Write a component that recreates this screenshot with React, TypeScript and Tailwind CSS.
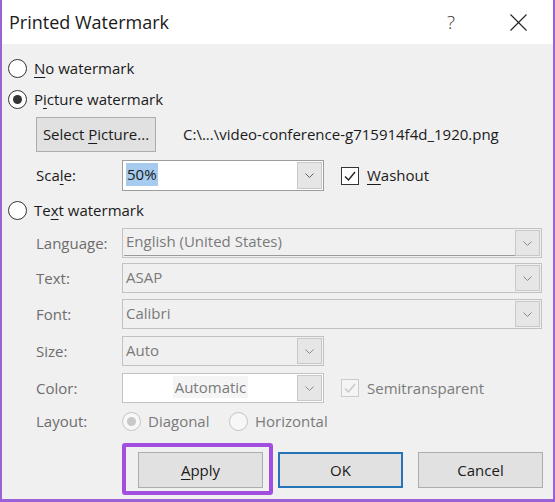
import type { ReactNode } from "react";

const ui = "font-['Segoe_UI','Open_Sans','Noto_Sans',sans-serif]";

function U({ children }: { children: ReactNode }) {
  return <span className="underline underline-offset-[3px] decoration-1">{children}</span>;
}

function Radio({ checked, disabled }: { checked?: boolean; disabled?: boolean }) {
  return (
    <span
      className={`flex h-[19px] w-[19px] shrink-0 items-center justify-center rounded-full border ${
        disabled ? "border-[#c4c4c4] bg-[#f7f7f7]" : "border-[#333333] bg-white"
      }`}
    >
      {checked && (
        <span className={`h-[9px] w-[9px] rounded-full ${disabled ? "bg-[#c8c8c8]" : "bg-[#333333]"}`} />
      )}
    </span>
  );
}

function Check({ disabled }: { disabled?: boolean }) {
  return (
    <span
      className={`flex h-[18px] w-[18px] shrink-0 items-center justify-center border ${
        disabled ? "border-[#cccccc] bg-[#f4f4f4]" : "border-[#333333] bg-white"
      }`}
    >
      <svg width="14" height="14" viewBox="0 0 14 14" fill="none">
        <polyline
          points="2,7.5 5.5,11 12,3"
          stroke={disabled ? "#c6c6c6" : "#222222"}
          strokeWidth="1.4"
        />
      </svg>
    </span>
  );
}

function Chevron({ disabled }: { disabled?: boolean }) {
  return (
    <svg width="9" height="5" viewBox="0 0 9 5" fill="none">
      <polyline points="0.5,0.5 4.5,4.5 8.5,0.5" stroke={disabled ? "#8a8a8a" : "#606060"} strokeWidth="1" />
    </svg>
  );
}

function Combo({
  value,
  wide,
  disabled,
  selected,
  center,
  white,
  line,
}: {
  value: string;
  wide?: boolean;
  disabled?: boolean;
  selected?: boolean;
  center?: boolean;
  white?: boolean;
  line?: boolean;
}) {
  return (
    <div
      className={`flex h-full ${wide ? "w-[420px]" : "w-[202px]"} items-stretch border p-px ${
        disabled ? "border-[#c2c2c2]" : "border-[#9c9c9c]"
      } ${white || !disabled ? "bg-white" : "bg-[#f0f0f0]"}`}
    >
      <div
        className={`flex flex-1 items-center pb-[2px] ${center ? "justify-center" : "pl-[2px]"} ${
          line ? "border-b border-[#9a9a9a]" : ""
        }`}
      >
        <span
          className={`${disabled ? "text-[#7a7a7a]" : "text-[#1b1b1b]"} ${
            selected ? "bg-[#a6cbee] px-px" : ""
          } ${center ? "bg-[#f5f5f5] px-[2px]" : ""}`}
        >
          {value}
        </span>
      </div>
      <div className="flex w-[25px] items-center justify-center border border-[#c8c8c8] bg-[#e6e6e6]">
        <Chevron disabled={disabled} />
      </div>
    </div>
  );
}

function Field({ label, children }: { label: ReactNode; children: ReactNode }) {
  return (
    <div className="flex h-full items-center">
      <span className="w-[86px] shrink-0">{label}</span>
      {children}
    </div>
  );
}

function Btn({ children, primary }: { children: ReactNode; primary?: boolean }) {
  return (
    <button
      type="button"
      className={`flex h-[36px] w-[125px] items-center justify-center bg-[#e1e1e1] text-[#1b1b1b] ${
        primary ? "border-2 border-[#2673b8]" : "border border-[#adadad]"
      }`}
    >
      <span>{children}</span>
    </button>
  );
}

export default function App() {
  return (
    <div
      className={`${ui} flex h-[502px] w-[555px] flex-col overflow-hidden border-x-2 border-b-[3px] border-[#9a62d4] text-[15px] text-[#1b1b1b]`}
    >
      {/* title bar */}
      <div className="flex h-[44px] shrink-0 items-center bg-white pl-[7px]">
        <span className="text-[18px] text-[#1a1a1a]">Printed Watermark</span>
        <span className="ml-auto text-[19px] font-light text-[#333333]">?</span>
        <svg className="ml-[55px] mr-[26px]" width="17" height="17" viewBox="0 0 17 17" fill="none">
          <line x1="0.5" y1="0.5" x2="16.5" y2="16.5" stroke="#222222" strokeWidth="1.1" />
          <line x1="16.5" y1="0.5" x2="0.5" y2="16.5" stroke="#222222" strokeWidth="1.1" />
        </svg>
      </div>

      <div className="flex flex-1 flex-col bg-[#f0f0f0]">
        <div className="mt-[15px] flex h-[19px] items-center gap-[7px] pl-[6px]">
          <Radio />
          <span>
            <U>N</U>o watermark
          </span>
        </div>

        <div className="mt-[12px] flex h-[19px] items-center gap-[7px] pl-[6px]">
          <Radio checked />
          <span>
            P<U>i</U>cture watermark
          </span>
        </div>

        <div className="mt-[8px] flex h-[35px] items-center pl-[34px]">
          <button
            type="button"
            className="flex h-full w-[120px] items-center justify-center border border-[#adadad] bg-[#e1e1e1]"
          >
            <span>
              Select <U>P</U>icture...
            </span>
          </button>
          <span className="ml-[27px]">C:\...\video-conference-g715914f4d_1920.png</span>
        </div>

        <div className="mt-[8px] h-[31px] pl-[34px]">
          <Field
            label={
              <>
                Sca<U>l</U>e:
              </>
            }
          >
            <Combo value="50%" selected />
            <div className="ml-[17px] flex items-center gap-[8px]">
              <Check />
              <span>
                <U>W</U>ashout
              </span>
            </div>
          </Field>
        </div>

        <div className="mt-[10px] flex h-[19px] items-center gap-[7px] pl-[6px]">
          <Radio />
          <span>
            Te<U>x</U>t watermark
          </span>
        </div>

        <div className="text-[#6d6d6d]">
          <div className="mt-[8px] h-[30px] pl-[34px]">
            <Field label="Language:">
              <Combo value="English (United States)" wide disabled line />
            </Field>
          </div>
          <div className="mt-[5px] h-[30px] pl-[34px]">
            <Field label="Text:">
              <Combo value="ASAP" wide disabled />
            </Field>
          </div>
          <div className="mt-[6px] h-[30px] pl-[34px]">
            <Field label="Font:">
              <Combo value="Calibri" wide disabled />
            </Field>
          </div>
          <div className="mt-[7px] h-[30px] pl-[34px]">
            <Field label="Size:">
              <Combo value="Auto" disabled />
            </Field>
          </div>
          <div className="mt-[7px] h-[30px] pl-[34px]">
            <Field label="Color:">
              <Combo value="Automatic" disabled white center />
              <div className="ml-[17px] flex items-center gap-[8px]">
                <Check disabled />
                <span className="text-[#7a7a7a]">Semitransparent</span>
              </div>
            </Field>
          </div>
          <div className="mt-[9px] h-[19px] pl-[34px]">
            <Field label="Layout:">
              <div className="flex w-[107px] items-center gap-[7px]">
                <Radio checked disabled />
                <span className="text-[#7a7a7a]">Diagonal</span>
              </div>
              <div className="flex items-center gap-[7px]">
                <Radio disabled />
                <span className="text-[#7a7a7a]">Horizontal</span>
              </div>
            </Field>
          </div>
        </div>

        {/* dialog buttons */}
        <div className="mt-[21px] flex h-[36px] items-start pl-[120px]">
          <div className="-mt-[9px] rounded-[3px] border-4 border-[#a24fe0] pb-[3px] pl-[12px] pr-[6px] pt-[5px]">
            <Btn>
              <U>A</U>pply
            </Btn>
          </div>
          <div className="ml-[5px]">
            <Btn primary>OK</Btn>
          </div>
          <div className="ml-[15px]">
            <Btn>Cancel</Btn>
          </div>
        </div>
      </div>
    </div>
  );
}
